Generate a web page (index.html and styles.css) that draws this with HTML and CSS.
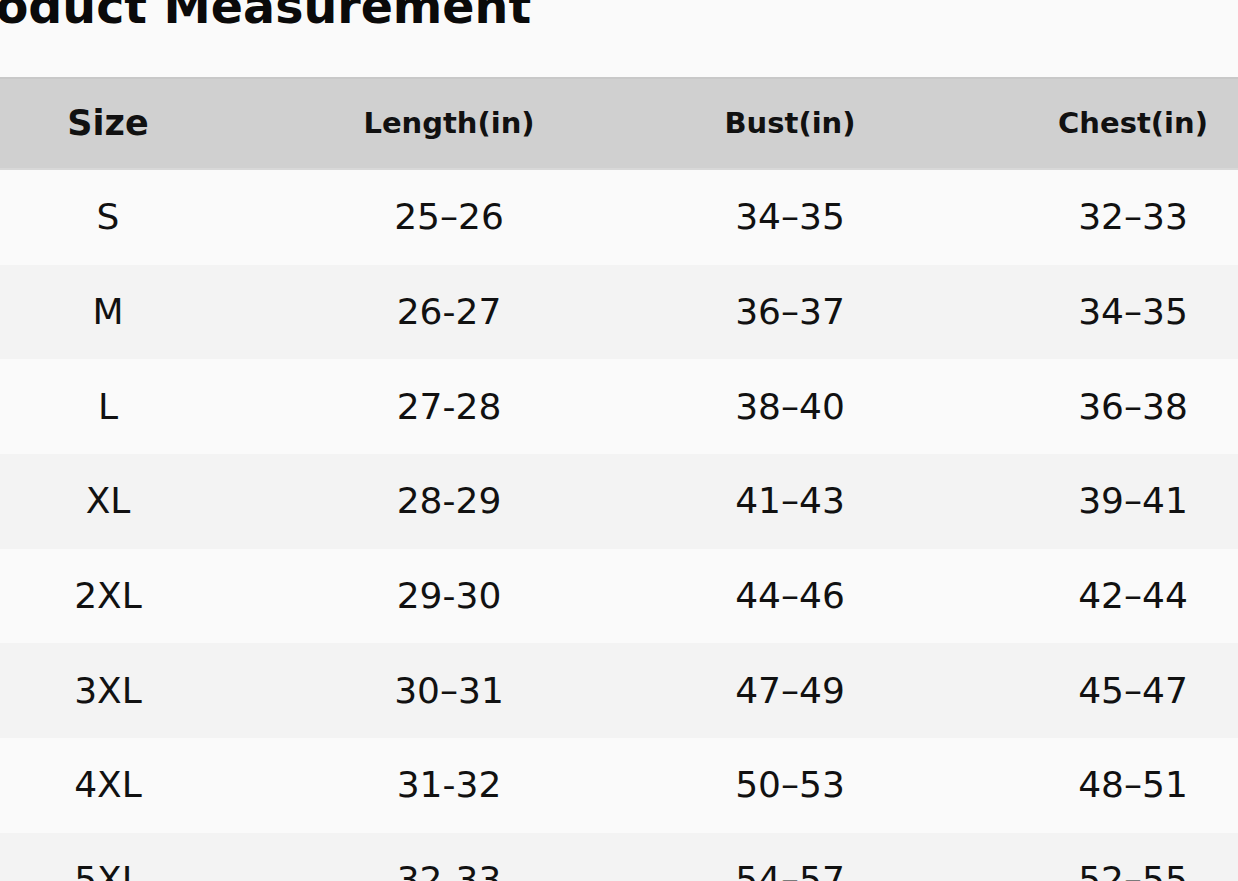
FILE: index.html
```html
<!DOCTYPE html>
<html lang="en">
<head>
<meta charset="utf-8">
<title>Product Measurement</title>
<link rel="stylesheet" href="styles.css">
</head>
<body>
<div class="sheet">
  <h1 class="title">Product Measurement</h1>
  <div class="table">
    <div class="row head">
      <div class="cell size-head">Size</div>
      <div class="cell">Length(in)</div>
      <div class="cell">Bust(in)</div>
      <div class="cell">Chest(in)</div>
    </div>
    <div class="row"><div class="cell">S</div><div class="cell">25–26</div><div class="cell">34–35</div><div class="cell">32–33</div></div>
    <div class="row alt"><div class="cell">M</div><div class="cell">26-27</div><div class="cell">36–37</div><div class="cell">34–35</div></div>
    <div class="row"><div class="cell">L</div><div class="cell">27-28</div><div class="cell">38–40</div><div class="cell">36–38</div></div>
    <div class="row alt"><div class="cell">XL</div><div class="cell">28-29</div><div class="cell">41–43</div><div class="cell">39–41</div></div>
    <div class="row"><div class="cell">2XL</div><div class="cell">29-30</div><div class="cell">44–46</div><div class="cell">42–44</div></div>
    <div class="row alt"><div class="cell">3XL</div><div class="cell">30–31</div><div class="cell">47–49</div><div class="cell">45–47</div></div>
    <div class="row"><div class="cell">4XL</div><div class="cell">31-32</div><div class="cell">50–53</div><div class="cell">48–51</div></div>
    <div class="row alt"><div class="cell">5XL</div><div class="cell">32-33</div><div class="cell">54–57</div><div class="cell">52–55</div></div>
  </div>
</div>
</body>
</html>
```

FILE: styles.css
```css
html, body {
  margin: 0;
  padding: 0;
  background: #fafafa;
  overflow: hidden;
}

body {
  font-family: "DejaVu Sans", "Liberation Sans", sans-serif;
  color: #111;
}

.sheet {
  margin-left: -62.5px;
  width: 1368px;
}

.title {
  margin: -17px 0 47px 0;
  font-size: 47.5px;
  line-height: 47px;
  font-weight: bold;
  color: #0a0a0a;
}

.table {
  display: flex;
  flex-direction: column;
}

.row {
  display: grid;
  grid-template-columns: 341px 341px 341px 345px;
  height: 94.7px;
  align-items: center;
  background: #fafafa;
}

.row.alt {
  background: #f3f3f3;
}

.row.head {
  height: 93px;
  box-sizing: border-box;
  background: #d0d0d0;
  border-top: 2px solid #c8c8c8;
  border-bottom: 2px solid #d8d8d8;
  font-weight: bold;
}

.cell {
  text-align: center;
  font-size: 36px;
  line-height: 1;
}

.row.head .cell {
  font-size: 29px;
}

.row.head .cell.size-head {
  font-size: 35px;
}
```
